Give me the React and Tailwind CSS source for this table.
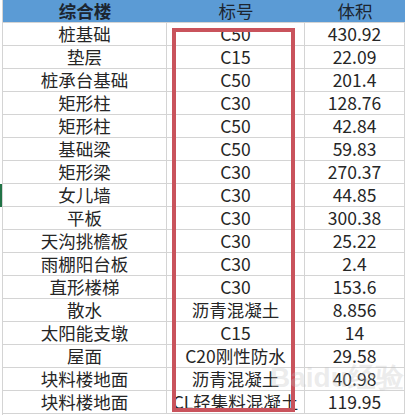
import React from 'react';

const rows = [
  ['桩基础', 'C50', '430.92'],
  ['垫层', 'C15', '22.09'],
  ['桩承台基础', 'C50', '201.4'],
  ['矩形柱', 'C30', '128.76'],
  ['矩形柱', 'C50', '42.84'],
  ['基础梁', 'C50', '59.83'],
  ['矩形梁', 'C30', '270.37'],
  ['女儿墙', 'C30', '44.85'],
  ['平板', 'C30', '300.38'],
  ['天沟挑檐板', 'C30', '25.22'],
  ['雨棚阳台板', 'C30', '2.4'],
  ['直形楼梯', 'C30', '153.6'],
  ['散水', '沥青混凝土', '8.856'],
  ['太阳能支墩', 'C15', '14'],
  ['屋面', 'C20刚性防水', '29.58'],
  ['块料楼地面', '沥青混凝土', '40.98'],
  ['块料楼地面', 'CL轻集料混凝土', '119.95'],
];

function App() {
  return (
    <div
      className="relative w-[408px] h-[415px] bg-white overflow-hidden flex text-[17.5px] text-[#262626]"
      style={{ fontFamily: '"Noto Sans CJK SC", "Noto Sans", sans-serif' }}
    >
      {/* row header gutter */}
      <div className="w-[2px] flex flex-col">
        {Array.from({ length: 18 }).map((_, i) => (
          <div key={i} className={`h-[23px] ${i === 8 ? 'bg-[#217346]' : ''}`} />
        ))}
      </div>

      {/* sheet */}
      <div className="border-l border-[#d4d4d4] flex flex-col">
        <div className="grid grid-cols-[164px_138px_100px] h-[23px] bg-[#5b9bd5] border-b border-[#d4d4d4] text-[#1c2530] leading-none">
          <div className="flex items-center justify-center font-bold">综合楼</div>
          <div className="flex items-center justify-center">标号</div>
          <div className="flex items-center justify-center">体积</div>
        </div>
        {rows.map((r, i) => (
          <div
            key={i}
            className="grid grid-cols-[164px_138px_100px] h-[23px] border-b border-[#d4d4d4] leading-none"
          >
            <div className="flex items-center justify-center border-r border-[#d4d4d4] whitespace-nowrap">{r[0]}</div>
            <div className="flex items-center justify-center border-r border-[#d4d4d4] whitespace-nowrap overflow-hidden">
              {r[1]}
            </div>
            <div className="flex items-center justify-center border-r border-[#d4d4d4]">{r[2]}</div>
          </div>
        ))}
      </div>

      {/* red highlight box */}
      <div className="absolute left-[172px] top-[28px] w-[123px] h-[384px] border-4 border-[#c9535c] pointer-events-none" />

      {/* watermark */}
      <div className="absolute left-[270px] top-[364px] pointer-events-none text-[rgba(190,190,190,0.3)] leading-none">
        <div className="text-[28px] font-bold" style={{ fontFamily: '"Liberation Sans", sans-serif' }}>
          Baidu经验
        </div>
      </div>
    </div>
  );
}

export default App;
